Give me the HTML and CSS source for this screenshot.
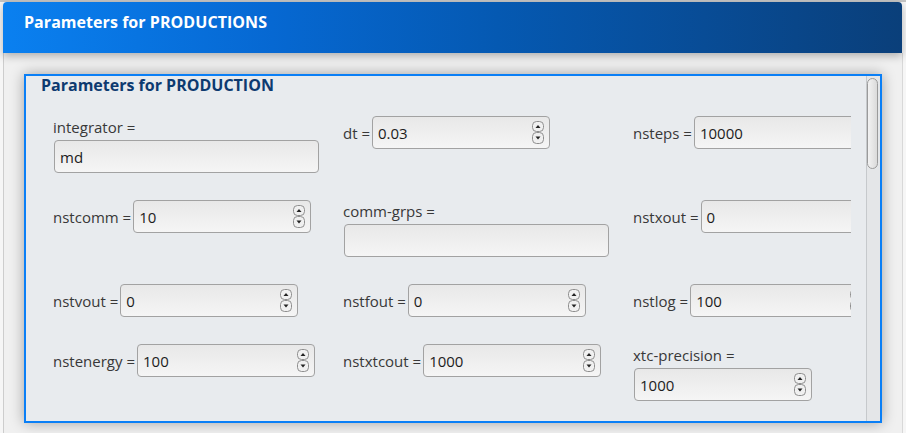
FILE: index.html
```html
<!DOCTYPE html>
<html lang="en">
<head>
<meta charset="utf-8">
<title>Parameters for PRODUCTIONS</title>
<link rel="stylesheet" href="styles.css">
</head>
<body>
<div class="window">
  <header class="titlebar"><h1>Parameters for PRODUCTIONS</h1></header>
  <main class="panel">
    <section class="group">
      <div class="viewport">
        <h2 class="group-title">Parameters for PRODUCTION</h2>
        <div class="grid">
          <div class="field stacked"><label>integrator =</label><div class="edit line">md</div></div>
          <div class="field"><label>dt =</label><div class="edit spin"><span>0.03</span><svg class="spin-icon" width="12" height="23" viewBox="0 0 12 23"><rect x="0.5" y="0.5" width="11" height="10" rx="4"/><path d="M3.5 7 L6 4 L8.5 7Z"/><rect x="0.5" y="11.5" width="11" height="11" rx="4"/><path d="M3.5 15.5 L6 18.5 L8.5 15.5Z"/></svg></div></div>
          <div class="field"><label>nsteps =</label><div class="edit spin"><span>10000</span><svg class="spin-icon" width="12" height="23" viewBox="0 0 12 23"><rect x="0.5" y="0.5" width="11" height="10" rx="4"/><path d="M3.5 7 L6 4 L8.5 7Z"/><rect x="0.5" y="11.5" width="11" height="11" rx="4"/><path d="M3.5 15.5 L6 18.5 L8.5 15.5Z"/></svg></div></div>

          <div class="field"><label>nstcomm =</label><div class="edit spin"><span>10</span><svg class="spin-icon" width="12" height="23" viewBox="0 0 12 23"><rect x="0.5" y="0.5" width="11" height="10" rx="4"/><path d="M3.5 7 L6 4 L8.5 7Z"/><rect x="0.5" y="11.5" width="11" height="11" rx="4"/><path d="M3.5 15.5 L6 18.5 L8.5 15.5Z"/></svg></div></div>
          <div class="field stacked"><label>comm-grps =</label><div class="edit line"></div></div>
          <div class="field"><label>nstxout =</label><div class="edit spin"><span>0</span><svg class="spin-icon" width="12" height="23" viewBox="0 0 12 23"><rect x="0.5" y="0.5" width="11" height="10" rx="4"/><path d="M3.5 7 L6 4 L8.5 7Z"/><rect x="0.5" y="11.5" width="11" height="11" rx="4"/><path d="M3.5 15.5 L6 18.5 L8.5 15.5Z"/></svg></div></div>

          <div class="field"><label>nstvout =</label><div class="edit spin"><span>0</span><svg class="spin-icon" width="12" height="23" viewBox="0 0 12 23"><rect x="0.5" y="0.5" width="11" height="10" rx="4"/><path d="M3.5 7 L6 4 L8.5 7Z"/><rect x="0.5" y="11.5" width="11" height="11" rx="4"/><path d="M3.5 15.5 L6 18.5 L8.5 15.5Z"/></svg></div></div>
          <div class="field"><label>nstfout =</label><div class="edit spin"><span>0</span><svg class="spin-icon" width="12" height="23" viewBox="0 0 12 23"><rect x="0.5" y="0.5" width="11" height="10" rx="4"/><path d="M3.5 7 L6 4 L8.5 7Z"/><rect x="0.5" y="11.5" width="11" height="11" rx="4"/><path d="M3.5 15.5 L6 18.5 L8.5 15.5Z"/></svg></div></div>
          <div class="field"><label>nstlog =</label><div class="edit spin"><span>100</span><svg class="spin-icon" width="12" height="23" viewBox="0 0 12 23"><rect x="0.5" y="0.5" width="11" height="10" rx="4"/><path d="M3.5 7 L6 4 L8.5 7Z"/><rect x="0.5" y="11.5" width="11" height="11" rx="4"/><path d="M3.5 15.5 L6 18.5 L8.5 15.5Z"/></svg></div></div>

          <div class="field"><label>nstenergy =</label><div class="edit spin"><span>100</span><svg class="spin-icon" width="12" height="23" viewBox="0 0 12 23"><rect x="0.5" y="0.5" width="11" height="10" rx="4"/><path d="M3.5 7 L6 4 L8.5 7Z"/><rect x="0.5" y="11.5" width="11" height="11" rx="4"/><path d="M3.5 15.5 L6 18.5 L8.5 15.5Z"/></svg></div></div>
          <div class="field"><label>nstxtcout =</label><div class="edit spin"><span>1000</span><svg class="spin-icon" width="12" height="23" viewBox="0 0 12 23"><rect x="0.5" y="0.5" width="11" height="10" rx="4"/><path d="M3.5 7 L6 4 L8.5 7Z"/><rect x="0.5" y="11.5" width="11" height="11" rx="4"/><path d="M3.5 15.5 L6 18.5 L8.5 15.5Z"/></svg></div></div>
          <div class="field stacked"><label>xtc-precision =</label><div class="edit spin"><span>1000</span><svg class="spin-icon" width="12" height="23" viewBox="0 0 12 23"><rect x="0.5" y="0.5" width="11" height="10" rx="4"/><path d="M3.5 7 L6 4 L8.5 7Z"/><rect x="0.5" y="11.5" width="11" height="11" rx="4"/><path d="M3.5 15.5 L6 18.5 L8.5 15.5Z"/></svg></div></div>
        </div>
      </div>
      <div class="scrollbar"><div class="thumb"></div></div>
    </section>
  </main>
</div>
</body>
</html>
```

FILE: styles.css
```css
html, body {
  margin: 0;
  padding: 0;
}
body {
  width: 906px;
  height: 433px;
  overflow: hidden;
  background: #f6f6f6;
  font-family: "Open Sans", "Noto Sans", sans-serif;
}
.window {
  border-top: 2px solid #c4c4c4;
  height: 431px;
}
.titlebar {
  position: relative;
  z-index: 1;
  margin: 0 4px 0 3px;
  height: 51px;
  box-sizing: border-box;
  padding: 10px 0 0 21px;
  border-radius: 4px 4px 0 0;
  background: linear-gradient(to right, #0a80f0 0%, #0668d2 30%, #0559b2 55%, #084c96 78%, #0a3f7a 100%);
  box-shadow: 0 3px 9px rgba(0, 0, 0, 0.28);
}
.titlebar h1 {
  margin: 0;
  font-size: 16px;
  line-height: 20px;
  font-weight: 700;
  color: #ffffff;
  letter-spacing: 0.05px;
}
.panel {
  display: block;
  margin: 0 3px 0 3px;
  height: 380px;
  box-sizing: border-box;
  padding: 21px 0 0 20px;
  border-left: 1px solid #cdcdcd;
  border-right: 1px solid #d8d8d8;
  background: #f0f0f0;
}
.group {
  display: flex;
  width: 858px;
  height: 349px;
  box-sizing: border-box;
  border: 2px solid #0a7ff6;
  background: #e8ebee;
  box-shadow: 0 0 13px rgba(0, 0, 0, 0.33);
}
.viewport {
  flex: 1;
  min-width: 0;
  margin-right: 15px;
  padding-top: 2px;
}
.group-title {
  margin: 0 0 0 15px;
  font-size: 16px;
  line-height: 14px;
  font-weight: 700;
  color: #0d3a70;
  white-space: nowrap;
}
.grid {
  display: grid;
  grid-template-columns: repeat(3, 290px);
  row-gap: 27px;
  align-items: start;
  margin: 24px 0 0 27px;
  overflow: hidden;
}
.field {
  display: flex;
  align-items: center;
  gap: 2px;
  font-size: 15px;
  color: #383838;
  white-space: nowrap;
}
.field label {
  line-height: 20px;
}
.field.stacked {
  flex-direction: column;
  align-items: flex-start;
  gap: 0;
}
.field.stacked label {
  padding-top: 1px;
  margin-bottom: 3px;
}
.field.stacked .edit {
  margin-left: 1px;
}
.edit {
  flex: none;
  display: flex;
  align-items: center;
  height: 33px;
  box-sizing: border-box;
  padding: 0 5px 0 5px;
  border: 1px solid #a2a2a2;
  border-radius: 4px;
  background: linear-gradient(#e8e8e8, #f5f5f5);
  font-size: 15px;
  line-height: 20px;
  color: #1c1c1c;
}
.edit.line {
  width: 265px;
}
.edit.spin {
  width: 178px;
}
.spin-icon {
  margin-left: auto;
  display: block;
}
.spin-icon rect {
  fill: #f0f0f0;
  stroke: #8f8f8f;
  stroke-width: 1;
}
.spin-icon path {
  fill: #222222;
}
.scrollbar {
  flex: none;
  width: 14px;
  box-sizing: border-box;
  padding: 2px 2px 0 0;
  border-left: 1px solid #c6c9cc;
  background: #e4e6e8;
}
.thumb {
  width: 11px;
  height: 91px;
  box-sizing: border-box;
  border: 1px solid #9a9a9a;
  border-radius: 6px;
  background: linear-gradient(to right, #f2f2f2, #dadada);
}
```
